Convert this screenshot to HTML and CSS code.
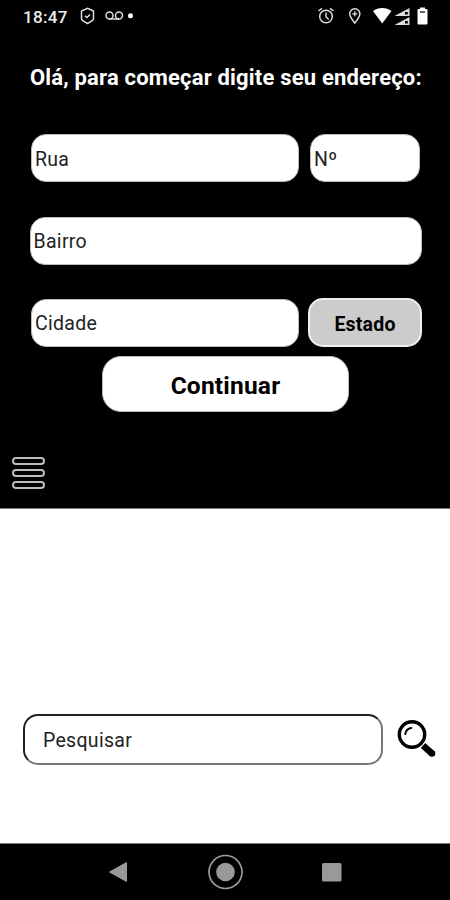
FILE: index.html
```html
<!DOCTYPE html>
<html lang="pt-BR">
<head>
    <meta charset="UTF-8">
    <meta name="viewport" content="width=device-width, initial-scale=1.0">
    <title>Endereço</title>
    <link rel="stylesheet" href="styles.css">
</head>
<body>

    <!-- Status bar -->
    <header class="status-bar">
        <span class="clock">18:47</span>
        <svg class="status-left" width="56" height="20" viewBox="0 0 56 20" fill="none" stroke="#ddd" stroke-width="1.5">
            <path d="M8.500 2.300L14.500 5V12.500Q14.500 14.500 8.500 17.500Q2.500 14.500 2.500 12.500V5Z"/>
            <path d="M6 9.800L7.900 11.500L11 8.500"/>
            <circle cx="30.500" cy="9.500" r="3.500"/>
            <circle cx="40" cy="9.500" r="3.500"/>
            <path d="M30.500 13H40"/>
            <circle cx="51.500" cy="9.700" r="2.500" fill="#fff" stroke="none"/>
        </svg>
        <svg class="status-right" width="114" height="20" viewBox="0 0 114 20" fill="none" stroke="#ddd" stroke-width="1.500">
            <circle cx="10" cy="10.500" r="6.300"/>
            <path d="M10 6.500V10.700L12.800 13.500M2.500 5L6 2.300M17.500 5L14 2.300"/>
            <path d="M38.800 17C35.500 13 33.700 10.200 33.700 7.800A5.100 5.100 0 0 1 43.900 7.800C43.900 10.200 42.100 13 38.800 17Z"/>
            <path d="M38.800 5.300V10.300M36.300 7.800H41.300" stroke-width="1.300"/>
            <path d="M57 5C62 1 70.500 1 75.500 5L66.200 17.500Z" fill="#fff" stroke="none"/>
            <path d="M78.500 10L93.500 2V10ZM78.500 19L93.500 11V19Z" fill="#ddd" stroke="none"/>
            <path d="M89 6H91.800V8.500H89ZM89 15H91.800V17.500H89Z" fill="#000" stroke="none"/>
            <path d="M104 3V1.500H109V3H110.500Q111.500 3 111.500 4V17.500Q111.500 18.500 110.500 18.500H102.500Q101.500 18.500 101.500 17.500V4Q101.500 3 102.500 3Z" fill="#fff" stroke="none"/>
            <path d="M104 6H109" stroke="#333"/>
        </svg>
    </header>

    <!-- Address form -->
    <form class="address">
        <h1>Olá, para começar digite seu endereço:</h1>
        <div class="row">
            <input class="street" type="text" placeholder="Rua">
            <input class="number" type="text" placeholder="Nº">
        </div>
        <div class="row">
            <input class="district" type="text" placeholder="Bairro">
        </div>
        <div class="row">
            <input class="city" type="text" placeholder="Cidade">
            <button class="state" type="button">Estado</button>
        </div>
        <button class="continue" type="submit">Continuar</button>
        <div class="menu">
            <span></span>
            <span></span>
            <span></span>
        </div>
    </form>

    <!-- Search -->
    <main class="search">
        <input class="search-input" type="text" placeholder="Pesquisar">
        <svg class="search-icon" width="40" height="38" viewBox="0 0 40 38" fill="none" stroke="#000">
            <circle cx="15" cy="14.500" r="12.700" stroke-width="3.400"/>
            <path d="M8.300 14C8.700 10.900 11 8.500 14.200 8" stroke-width="2" stroke-linecap="round"/>
            <path d="M26 25.500L35 33.500" stroke-width="6.500"/>
            <circle cx="35" cy="33.500" r="3.300" fill="#000" stroke="none"/>
        </svg>
    </main>

    <!-- Navigation bar -->
    <nav class="nav-bar">
        <svg width="450" height="56" viewBox="0 0 450 56">
            <path d="M109.500 28L126.500 18.500V37.500Z" fill="#999" stroke="#999" stroke-linejoin="round"/>
            <circle cx="225.500" cy="28" r="16.500" fill="none" stroke="#999" stroke-width="1.700"/>
            <circle cx="225.500" cy="28" r="9.300" fill="#999"/>
            <rect x="322" y="19" width="19.500" height="18.500" rx="1.500" fill="#999"/>
        </svg>
    </nav>

</body>
</html>
```
FILE: styles.css
```css
* {
    box-sizing: border-box;
}
body {
    display: flex;
    flex-direction: column;
    width: 450px;
    height: 900px;
    margin: 0;
    background-color: #fff;
    font-family: Roboto, sans-serif;
    overflow: hidden;
}
.status-bar {
    display: flex;
    align-items: center;
    height: 34px;
    padding: 0 20px 2px 23px;
    background-color: #000;
    color: #eee;
}
.clock {
    width: 56px;
    padding-top: 1px;
    font-size: 17px;
    font-weight: 500;
    letter-spacing: 0.3px;
}
.status-right {
    margin-left: auto;
}
.address {
    display: flex;
    flex-direction: column;
    height: 475px;
    background-color: #000;
    border-bottom: 1px solid #777;
}
h1 {
    height: 100px;
    margin: 0;
    padding: 31px 0 0 30px;
    color: #fff;
    font-size: 22px;
    font-weight: 700;
    letter-spacing: 0.18px;
    line-height: 26px;
    white-space: nowrap;
}
.row {
    display: flex;
    height: 48px;
    margin: 0 28px 34.500px 31px;
}
input, button {
    margin: 0;
    border: 1px solid #bbb;
    border-radius: 15px;
    background-color: #fff;
    color: #000;
    font-family: inherit;
}
input {
    padding: 2px 3px 0;
    font-size: 19.500px;
    letter-spacing: 0.3px;
}
input::placeholder {
    color: #222;
    opacity: 1;
}
.street, .city {
    width: 268px;
}
.number {
    width: 110px;
    margin-left: 11px;
}
.district {
    flex: none;
    width: 392px;
    margin-left: -1.500px;
    padding-top: 1px;
}
.city {
    padding-top: 1px;
}
.state {
    flex: none;
    width: 114px;
    height: 49px;
    margin: -1px 0 0 9px;
    padding: 3px 0 0;
    border: 2px solid #eee;
    background-color: #ccc;
    font-size: 19.500px;
    font-weight: 700;
    letter-spacing: 0.2px;
}
.continue {
    width: 247px;
    height: 56px;
    margin: -26px 0 0 102px;
    padding: 4px 0 0;
    border-radius: 19px;
    font-size: 24.500px;
    font-weight: 700;
    letter-spacing: 0.2px;
}
.menu {
    display: flex;
    flex-direction: column;
    gap: 4px;
    width: 33px;
    margin: 45px 0 0 12px;
}
.menu span {
    height: 8px;
    border: 2px solid #bbb;
    border-radius: 4px;
}
.search {
    display: flex;
    height: 334px;
    padding: 205px 12px 0 23px;
}
.search-input {
    width: 360px;
    height: 51px;
    padding: 1px 18px 0;
    border: 2px solid #222;
    border-right-color: #777;
    border-bottom-color: #777;
}
.search-icon {
    margin: 6px 0 0 14px;
}
.nav-bar {
    height: 57px;
    border-top: 1px solid #777;
    background-color: #000;
}
```
